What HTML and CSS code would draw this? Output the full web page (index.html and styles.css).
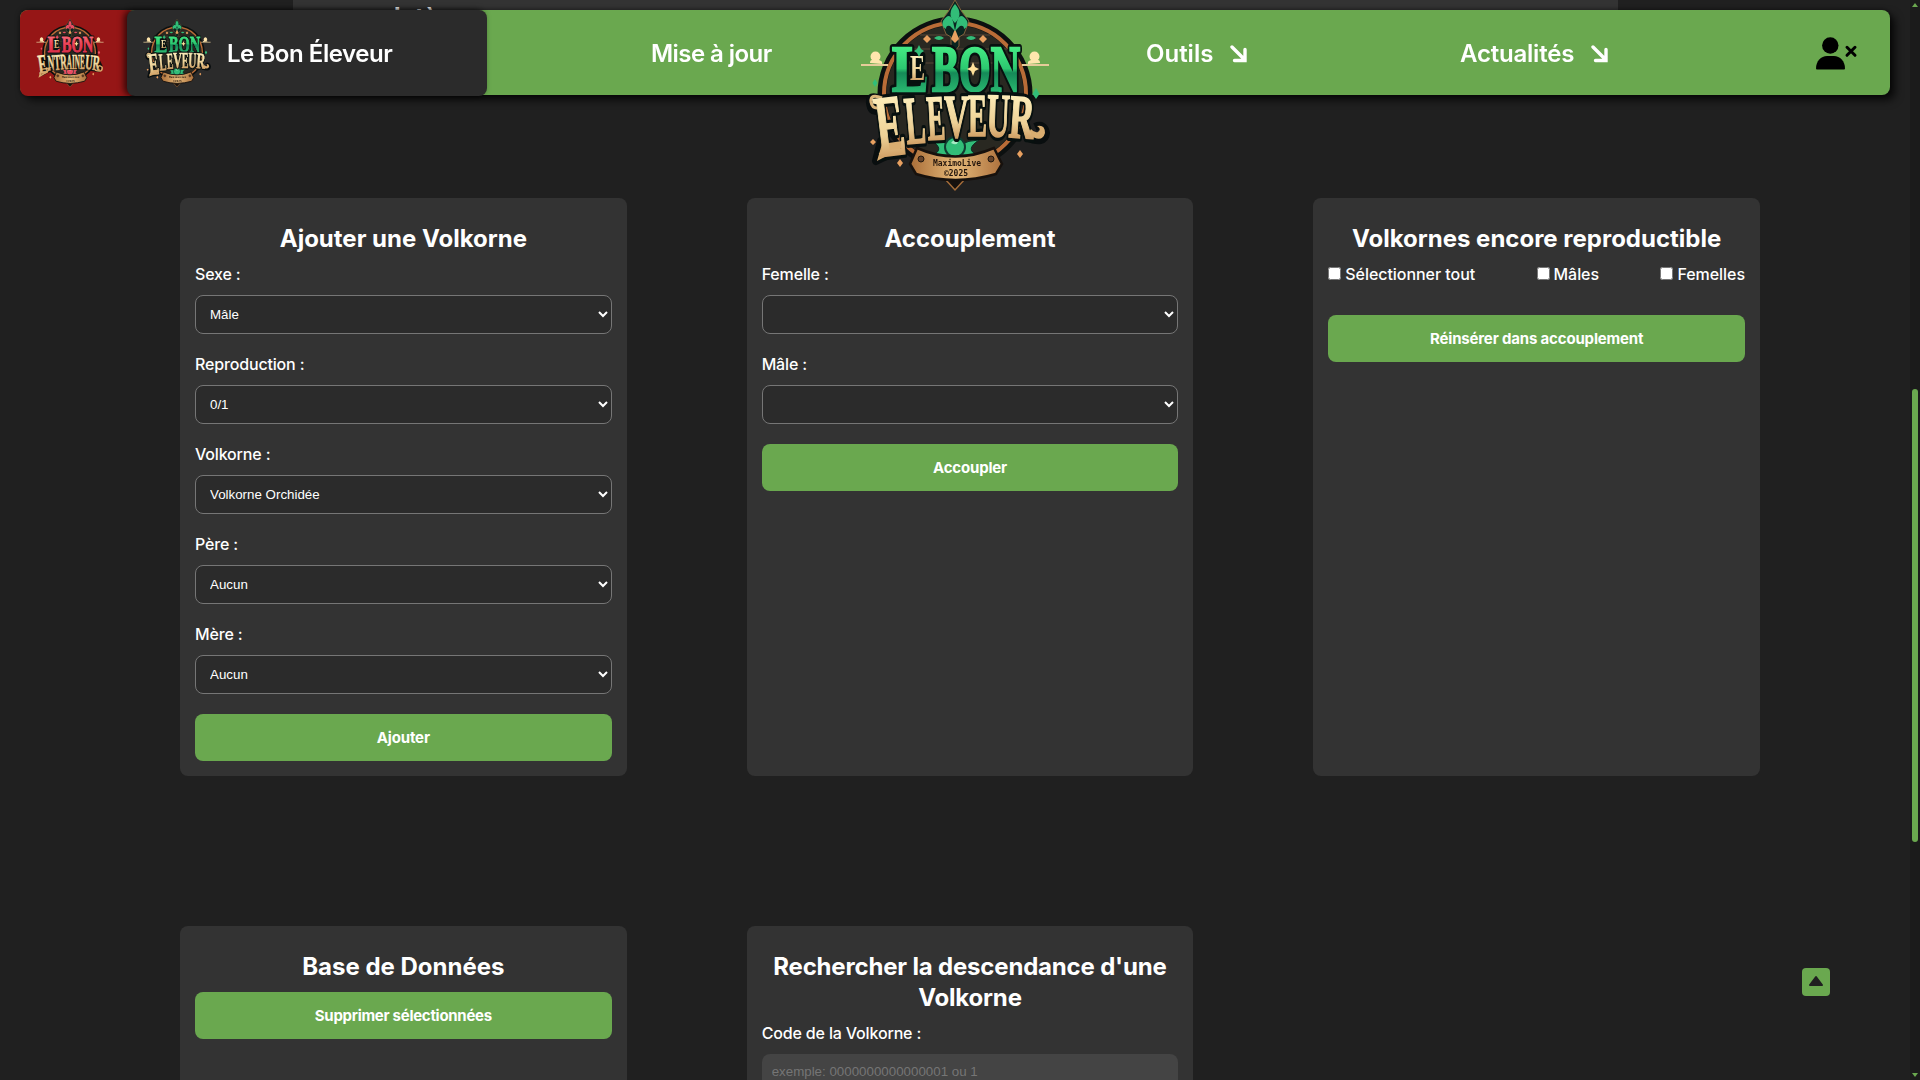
FILE: index.html
```html
<!DOCTYPE html>
<html lang="fr">
<head>
<meta charset="utf-8">
<title>Le Bon Éleveur</title>
<link rel="stylesheet" href="styles.css">
</head>
<body>
<svg class="defs" width="0" height="0">
  <defs>
    <linearGradient id="green" x1="0" y1="0" x2="0" y2="1"><stop offset="0.1" stop-color="#4df58a"/><stop offset=".5" stop-color="#2cc970"/><stop offset=".56" stop-color="#158a58"/><stop offset=".85" stop-color="#2bbd72"/></linearGradient>
    <linearGradient id="red" x1="0" y1="0" x2="0" y2="1"><stop offset="0" stop-color="#ff8590"/><stop offset=".5" stop-color="#ed4459"/><stop offset="1" stop-color="#d52643"/></linearGradient>
    <linearGradient id="gold" x1="0" y1="0" x2="0" y2="1"><stop offset=".15" stop-color="#fff0bd"/><stop offset=".6" stop-color="#edd196"/><stop offset="1" stop-color="#b9783e"/></linearGradient>
    <linearGradient id="scroll" x1="0" y1="0" x2="1" y2="0"><stop offset="0" stop-color="#a96d38"/><stop offset=".5" stop-color="#e5b878"/><stop offset="1" stop-color="#ad713d"/></linearGradient>
    <symbol id="frame" viewBox="20 0 190 193">
      <circle cx="115" cy="94" r="73" fill="#292821" stroke="#0c1010" stroke-width="9"/>
      <circle cx="115" cy="94" r="71" fill="none" stroke="#b96c37" stroke-width="4"/>
      <path d="M63 49h104M57 63h116M80 35h70" stroke="#40372c" stroke-width="2"/>
      <path d="M21 65h27M182 65h27" stroke="#e5cc99" stroke-width="2"/>
      <path d="M30 63q0-3 2-3a5 5 0 1 1 7 0q4 1 3 4zM200 63q0-3-2-3a5 5 0 1 0-7 0q-4 1-3 4z" fill="#ffe6ad"/>
      <path d="M115 0l7 12 7 9-5 13-5 3v9l-4 5-4-5v-9l-5-3-5-13 7-9z" fill="#0a2520" stroke="#80613c"/>
      <path d="M115 29l4 10-4 4-4-4zM87 35l4 4-4 4-4-4zM143 35l4 4-4 4-4-4zM33 139l3 3-3 3-3-3zM60 159l3 4-3 4-3-4zM180 150l3 4-3 4-3-4z" fill="#e8a060"/>
      <path d="M94 38q5-4 10 0-5 4-10 0zM126 38q5-4 10 0-5 4-10 0z" fill="var(--gem)"/>
      <path d="M115 4q9 10 0 19-9-9 0-19zM103 21q8-12 11 5l1 5-5-5q-4-1-4 3-5-3-3-8zM127 21q-8-12-11 5l-1 5 5-5q4-1 4 3 5-3 3-8z" fill="var(--gem)"/>
      <path d="M35 79l2.500 4-2.500 4-2.500-4zM196 88l3.500 6-3.500 5-3.500-5z" fill="var(--gem)"/>
      <path d="M105 179h20l-10 11z" fill="#16110e" stroke="#a66d39" stroke-width="1.500"/>
    </symbol>
    <symbol id="plate" viewBox="20 0 190 193">
      <path d="M92 155q14-5-1-15 23 1 24 15 1-14 24-15-15 10-1 15z" fill="var(--gem)" stroke="#092c23"/>
      <circle cx="115" cy="147" r="10" fill="var(--gem)" stroke="#113b31" stroke-width="2"/>
      <path d="M111 143q3-5 7-1-1 4-7 1z" fill="#d6ffe4" opacity=".7"/>
      <path d="M77 148q38 17 77 0l8 16-6 10q-41 12-80 0l-6-10z" fill="url(#scroll)" stroke="#17110d" stroke-width="2.500"/>
      <circle cx="81" cy="159" r="3" fill="#65432b" stroke="#21170f"/><circle cx="151" cy="159" r="3" fill="#65432b" stroke="#21170f"/>
      <text class="seal" x="93" y="166" textLength="48" lengthAdjust="spacingAndGlyphs" font-size="8">MaximoLive</text>
      <text class="seal" x="104" y="176" textLength="24" lengthAdjust="spacingAndGlyphs" font-size="8">©2025</text>
    </symbol>
    <symbol id="lebon" viewBox="20 0 190 193">
      <g class="outline">
        <text x="52" y="91" font-size="66" textLength="36" lengthAdjust="spacingAndGlyphs">L</text>
        <text x="92" y="91" font-size="66" textLength="88" lengthAdjust="spacingAndGlyphs">BON</text>
        <text x="70" y="80" font-size="35" textLength="15" lengthAdjust="spacingAndGlyphs">E</text>
      </g>
      <g class="letters" fill="var(--top)" stroke="var(--top)">
        <text x="52" y="91" font-size="66" textLength="36" lengthAdjust="spacingAndGlyphs">L</text>
        <text x="92" y="91" font-size="66" textLength="88" lengthAdjust="spacingAndGlyphs">BON</text>
      </g>
      <text class="notch" x="70" y="80" font-size="35" textLength="15" lengthAdjust="spacingAndGlyphs">E</text>
      <text class="gold" x="70" y="80" font-size="35" textLength="15" lengthAdjust="spacingAndGlyphs">E</text>
      <path d="M133 62l2 5 4 2-4 2-2 5-2-5-4-2 4-2z" fill="#ffe09a"/>
      <path d="M79 45l2 4 3 2-3 2-2 4-2-4-3-2 3-2z" fill="var(--gem)"/>
    </symbol>
    <symbol id="eleveur" viewBox="20 0 190 193">
      <path d="M40 99q-11-5-10 4 1 9 7 8M36 161l5-20 20 8zM186 137q19 8 20-4-2-10-11-6" fill="none" stroke="#090e0f" stroke-width="8" stroke-linejoin="round"/>
      <g class="outline">
        <text transform="translate(39 157) rotate(-7)" font-size="88" textLength="29" lengthAdjust="spacingAndGlyphs">E</text>
        <text transform="translate(67 144) rotate(-5)" font-size="68" textLength="20" lengthAdjust="spacingAndGlyphs">L</text>
        <text transform="translate(88 140) rotate(-3)" font-size="64" textLength="18" lengthAdjust="spacingAndGlyphs">E</text>
        <text x="104" y="137" font-size="62" textLength="25" lengthAdjust="spacingAndGlyphs">V</text>
        <text x="128" y="136" font-size="62" textLength="19" lengthAdjust="spacingAndGlyphs">E</text>
        <text transform="translate(146 136) rotate(2)" font-size="62" textLength="23" lengthAdjust="spacingAndGlyphs">U</text>
        <text transform="translate(168 137) rotate(4)" font-size="62" textLength="25" lengthAdjust="spacingAndGlyphs">R</text>
      </g>
      <path d="M42 98q-12-5-11 4 1 6 6 6" fill="none" stroke="#ddb77c" stroke-width="3"/>
      <path d="M37 161l5-17 20-3v7zM188 134q14 10 17-1 0-9-8-7 5 3 1 6-4 1-7-3z" fill="#d9ad70"/>
      <g class="gold-face">
        <text transform="translate(39 157) rotate(-7)" font-size="88" textLength="29" lengthAdjust="spacingAndGlyphs">E</text>
        <text transform="translate(67 144) rotate(-5)" font-size="68" textLength="20" lengthAdjust="spacingAndGlyphs">L</text>
        <text transform="translate(88 140) rotate(-3)" font-size="64" textLength="18" lengthAdjust="spacingAndGlyphs">E</text>
        <text x="104" y="137" font-size="62" textLength="25" lengthAdjust="spacingAndGlyphs">V</text>
        <text x="128" y="136" font-size="62" textLength="19" lengthAdjust="spacingAndGlyphs">E</text>
        <text transform="translate(146 136) rotate(2)" font-size="62" textLength="23" lengthAdjust="spacingAndGlyphs">U</text>
        <text transform="translate(168 137) rotate(4)" font-size="62" textLength="25" lengthAdjust="spacingAndGlyphs">R</text>
      </g>
    </symbol>
    <symbol id="entraineur" viewBox="20 0 190 193">
      <path d="M28 102l7 58 35-17h85l43 6 8-18-16-33z" fill="#100f0d"/>
      <path d="M30 160l5-19 24-4-8 11zM185 143q22 8 20-8-10-9-11 1" fill="none" stroke="#d6a769" stroke-width="4"/>
      <g class="gold-face">
        <text transform="translate(30 153) rotate(-8)" font-size="76" textLength="24" lengthAdjust="spacingAndGlyphs">E</text>
        <text transform="translate(54 144) rotate(-4)" font-size="62" textLength="53" lengthAdjust="spacingAndGlyphs">NTR</text>
        <text x="106" y="140" font-size="60" textLength="50" lengthAdjust="spacingAndGlyphs">AINE</text>
        <text transform="translate(156 140) rotate(5)" font-size="60" textLength="41" lengthAdjust="spacingAndGlyphs">UR</text>
      </g>
    </symbol>
    <symbol id="arrow" viewBox="0 0 17 18"><path d="M2 2l13 13M4.500 15.500H15V4.500" fill="none" stroke="#fff" stroke-width="3.400" stroke-linecap="round" stroke-linejoin="miter"/></symbol>
  </defs>
</svg>

<div class="previous"><span>lotè</span></div>

<header class="navbar">
  <a class="trainer"><svg class="logo logo-red"><use href="#frame"/><use href="#plate"/><use href="#lebon"/><use href="#entraineur"/></svg></a>
  <a class="brand"><svg class="logo logo-green"><use href="#frame"/><use href="#plate"/><use href="#lebon"/><use href="#eleveur"/></svg><span class="t-brand">Le Bon Éleveur</span></a>
  <nav class="links">
    <a class="update">Mise à jour</a>
    <a class="tools"><span class="t-tools">Outils</span><svg class="arrow"><use href="#arrow"/></svg></a>
    <a class="news"><span>Actualités</span><svg class="arrow"><use href="#arrow"/></svg></a>
    <a class="user"><svg width="42" height="33" viewBox="0 0 42 33"><circle cx="14.3" cy="8.5" r="8.2"/><path d="M0 31.500C0 24 5 19 11 19h7c6 0 11 5 11 12.500q0 1-1 1H1q-1 0-1-1z"/><path d="M31 10.300l8 8m0-8l-8 8" stroke="#000" stroke-width="3" stroke-linecap="round"/></svg></a>
  </nav>
  <svg class="logo logo-main logo-green"><use href="#frame"/><use href="#plate"/><use href="#lebon"/><use href="#eleveur"/></svg>
</header>

<main class="cards">
  <section class="card">
    <h2>Ajouter une Volkorne</h2>
    <label>Sexe :</label><select><option>Mâle</option></select>
    <label>Reproduction :</label><select><option>0/1</option></select>
    <label>Volkorne :</label><select><option>Volkorne Orchidée</option></select>
    <label>Père :</label><select><option>Aucun</option></select>
    <label>Mère :</label><select><option>Aucun</option></select>
    <button>Ajouter</button>
  </section>
  <section class="card">
    <h2>Accouplement</h2>
    <label>Femelle :</label><select></select>
    <label>Mâle :</label><select></select>
    <button>Accoupler</button>
  </section>
  <section class="card">
    <h2>Volkornes encore reproductible</h2>
    <div class="checks">
      <label><input type="checkbox"><span>Sélectionner tout</span></label>
      <label><input type="checkbox"><span>Mâles</span></label>
      <label><input type="checkbox"><span>Femelles</span></label>
    </div>
    <button>Réinsérer dans accouplement</button>
  </section>
  <section class="card">
    <h2>Base de Données</h2>
    <button class="delete">Supprimer sélectionnées</button>
  </section>
  <section class="card">
    <h2 class="tight">Rechercher la descendance d'une Volkorne</h2>
    <label>Code de la Volkorne :</label>
    <input class="code" type="text" placeholder="exemple: 0000000000000001 ou 1">
  </section>
</main>

<a class="to-top"><svg width="28" height="28"><path d="M8 17L14 9L20 17z" fill="#202020" stroke="#202020" stroke-width="2" stroke-linejoin="round"/></svg></a>
<div class="scrollbar">
  <svg width="6" height="4"><path d="M3 0l3 4H0z" fill="#6aa84f"/></svg>
  <div class="thumb"></div>
  <svg width="6" height="4"><path d="M0 0h6L3 4z" fill="#6aa84f"/></svg>
</div>
</body>
</html>
```
FILE: styles.css
```css
* { box-sizing: border-box; }
html, body { height: 1080px; overflow: hidden; }
body {
  margin: 0;
  background: #202020;
  color: #fff;
  font-family: Inter, "Liberation Sans", sans-serif;
  font-size: 16px;
}
.defs { position: absolute; }

.previous {
  width: 1325px;
  height: 40px;
  margin-left: 293px;
  padding: 2px 0 0 101px;
  background: #333;
  font-size: 24px;
  font-weight: 700;
}

.navbar {
  position: fixed;
  top: 10px;
  left: 20px;
  width: 1870px;
  height: 85px;
  display: flex;
  background: #6aa84f;
  border-radius: 8px;
  box-shadow: 5px 5px 8px #000b, 0 0 5px #0008;
  font-size: 24px;
  font-weight: 600;
}
.trainer, .brand {
  display: flex;
  align-items: center;
  height: 86px;
  flex: none;
}
.trainer { width: 117px; padding-left: 16px; background: #961616; border-radius: 8px; }
.brand {
  width: 360px;
  margin-left: -10px;
  padding-left: 16px;
  gap: 16px;
  background: #2b2b2b;
  border-radius: 8px;
  box-shadow: -3px 0 6px #000a;
}
.t-brand { letter-spacing: -.45px; padding-top: 1px; }
.logo { width: 68px; height: 69px; flex: none; }
.logo-green { --top: url(#green); --gem: #32bd78; }
.logo-red { --top: url(#red); --gem: #e94d61; }
.logo-main { position: absolute; left: 840px; top: -10px; width: 190px; height: 193px; }
symbol text { font-family: "Liberation Serif", serif; font-weight: 700; }
.outline { fill: #07100f; stroke: #07100f; stroke-width: 8; stroke-linejoin: round; }
.letters { stroke-width: 2.4; }
.notch { fill: #07100f; stroke: #07100f; stroke-width: 5; }
.gold { fill: url(#gold); }
.gold-face { fill: url(#gold); stroke: url(#gold); stroke-width: 1.6; }
symbol .seal { font-family: "DejaVu Sans Mono", monospace; fill: #24160d; }

.links { display: flex; align-items: center; height: 85px; flex: 1; white-space: nowrap; padding-top: 1px; }
.update { margin-left: 164px; width: 121px; letter-spacing: -.55px; }
.tools { margin-left: 374px; width: 101px; }
.news { margin-left: 213px; width: 148px; letter-spacing: -.2px; }
.tools, .news { display: flex; justify-content: space-between; align-items: center; }
.user { margin-left: 208px; display: flex; }
.arrow { width: 17px; height: 18px; margin-top: 1px; }

.cards {
  display: grid;
  grid-template-columns: repeat(3, 1fr);
  grid-template-rows: 578px 154px;
  gap: 150px 120px;
  width: 1580px;
  margin: 158px 0 0 180px;
}
.card { padding: 15px; background: #333; border-radius: 8px; }
.card:nth-child(n+4) { border-radius: 8px 8px 0 0; overflow: hidden; }
h2 { margin: 10px 0; font-size: 24px; line-height: 31px; font-weight: 700; text-align: center; }
.tight { letter-spacing: -.18px; }
label { display: block; height: 21px; margin-bottom: 10px; line-height: 21px; font-weight: 550; letter-spacing: -.16px; }
select {
  display: block;
  width: 100%;
  height: 39px;
  margin-bottom: 20px;
  padding: 10px;
  background: #2b2b2b;
  color: #fff;
  border: 1px solid #767676;
  border-radius: 8px;
  font: 13.333px "Liberation Sans", Arial, sans-serif;
}
button {
  display: block;
  width: 100%;
  height: 47px;
  padding: 0;
  border: 0;
  border-radius: 8px;
  background: #6aa84f;
  color: #fff;
  font: 700 15px Inter, sans-serif;
  letter-spacing: -.17px;
}
.delete { letter-spacing: -.28px; }
.checks { display: flex; justify-content: space-between; margin-bottom: 30px; }
.checks label { display: flex; margin: 0; gap: 4px; letter-spacing: -.05px; }
.checks input { width: 13px; height: 13px; margin: 3px 0 0; }
.code {
  display: block;
  width: 100%;
  height: 34px;
  padding: 0 10px;
  background: #444;
  border: 0;
  border-radius: 8px 8px 0 0;
  font: 13.333px "Liberation Sans", Arial, sans-serif;
}
.code::placeholder { color: #757575; }

.to-top {
  position: fixed;
  left: 1802px;
  top: 968px;
  width: 28px;
  height: 28px;
  background: #6aa84f;
  border-radius: 4px;
}
.scrollbar {
  position: fixed;
  top: 0;
  right: 0;
  width: 10px;
  height: 1080px;
  display: flex;
  flex-direction: column;
  align-items: center;
  justify-content: space-between;
  padding: 3px 0;
  background: #1b1b1b;
}
.thumb { width: 6px; height: 453px; margin-top: 151px; border-radius: 3px; background: #6aa84f; }
```
